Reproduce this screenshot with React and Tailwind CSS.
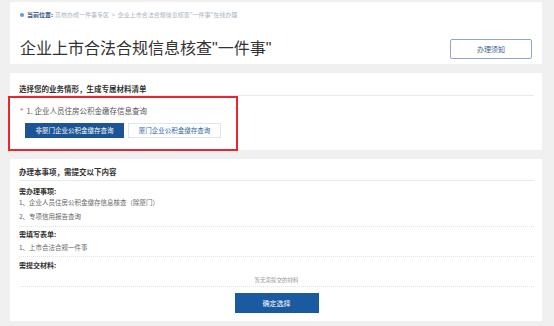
import React from 'react';

const needItems = ['1、企业人员住房公积金缴存信息核查（除厦门）', '2、专项信用报告查询'];

export default function App() {
  return (
    <div className="min-h-[326px] w-[554px] bg-[#f0f0f0] pl-[10px] pr-[12px] pt-[2px] pb-[4px] font-['Noto_Sans_CJK_SC',sans-serif] text-[#333]">
      {/* Header card */}
      <div className="h-[62px] bg-white pl-[10px] pr-[10px] pt-[10px]">
        <div className="flex h-[6px] items-center gap-[2px] text-[6px] leading-none">
          <span className="h-[4px] w-[4px] rounded-full bg-[#5b9be6]" />
          <span className="ml-[1px] font-bold text-[#3b5a8a]">当前位置:</span>
          <span className="text-[#aab4c2]">高效办成一件事专区 &nbsp;&gt;&nbsp; 企业上市合法合规信息核查"一件事"在线办理</span>
        </div>
        <div className="mt-[17px] flex items-center justify-between">
          <h1 className="text-[16px] leading-[24px] text-[#333]">
            企业上市合法合规信息核查<span className="font-['Liberation_Sans',sans-serif]">"</span>一件事<span className="font-['Liberation_Sans',sans-serif]">"</span>
          </h1>
          <button className="mt-[2px] h-[20px] w-[82px] rounded-[2px] border border-[#8fa6cc] bg-white text-[7px] text-[#3d5b8e]">
            办理须知
          </button>
        </div>
      </div>

      {/* Scenario card */}
      <div className="relative mt-[9px] h-[77px] bg-white pl-[9px] pr-[8px] pt-[10px]">
        <div className="flex h-[13px] items-center border-b border-[#e3ebf5] pb-[1px] text-[7.5px] font-bold text-[#333]">
          选择您的业务情形，生成专属材料清单
        </div>
        <div className="ml-[1px] mt-[9px] flex h-[12px] items-center text-[7.5px] text-[#555]">
          <span className="mr-[3px] text-[#e8333a]">*</span>
          1. 企业人员住房公积金缴存信息查询
        </div>
        <div className="ml-[6px] mt-[6px] flex gap-[4px]">
          <button className="h-[15px] w-[99px] bg-[#1c5495] text-[6.5px] text-white">非厦门企业公积金缴存查询</button>
          <button className="h-[15px] w-[93px] border border-[#dfe5ee] bg-white text-[6.5px] text-[#2d5fa6]">厦门企业公积金缴存查询</button>
        </div>
        <div className="pointer-events-none absolute left-[-2px] top-[23px] h-[55px] w-[230px] border-2 border-[#e8262c]" />
      </div>

      {/* Materials card */}
      <div className="mt-[9px] bg-white pl-[9px] pr-[8px] pt-[6px] pb-[8px]">
        <div className="flex h-[16px] items-center border-b border-[#e3ebf5] pb-[1px] text-[7.5px] font-bold text-[#333]">
          办理本事项，需提交以下内容
        </div>

        <div className="border-b border-dotted border-[#e2e2e2] pt-[4px] pb-[3px]">
          <div className="flex h-[12px] items-center text-[7px] font-bold text-[#333]">需办理事项:</div>
          {needItems.map((item, i) => (
            <div key={i} className={`flex h-[12px] items-center text-[6.5px] text-[#666] ${i === 0 ? '' : 'mt-[2px]'}`}>{item}</div>
          ))}
        </div>

        <div className="border-b border-dotted border-[#e2e2e2] pt-[1px] pb-[2px]">
          <div className="flex h-[12px] items-center text-[7px] font-bold text-[#333]">需填写表单:</div>
          <div className="mt-[2px] flex h-[12px] items-center text-[6.5px] text-[#666]">1、上市合法合规一件事</div>
        </div>

        <div className="border-b border-dotted border-[#e2e2e2] pt-[2px]">
          <div className="flex h-[12px] items-center text-[7px] font-bold text-[#333]">需提交材料:</div>
          <div className="mt-[3px] flex h-[12px] items-center justify-center text-[5.5px] text-[#999]">暂无需提交的材料</div>
        </div>

        <div className="mt-[6px] flex justify-center">
          <button className="h-[20px] w-[84px] bg-[#1a5aa0] text-[7px] text-white">确定选择</button>
        </div>
      </div>
    </div>
  );
}
